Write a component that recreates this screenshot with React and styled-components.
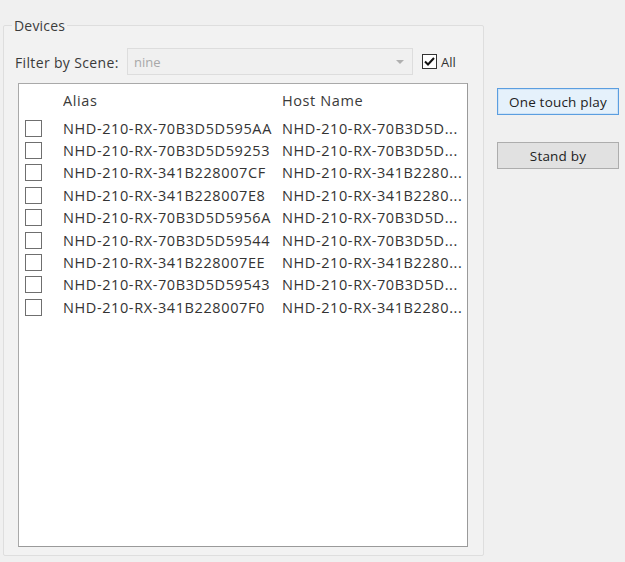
import styled, { createGlobalStyle } from "styled-components";

const GlobalStyle = createGlobalStyle`
  html, body {
    margin: 0;
    padding: 0;
    background: #f0f0f0;
  }
  body {
    font-family: "Open Sans", "Noto Sans", sans-serif;
    color: #333;
  }
`;

const Window = styled.div`
  width: 625px;
  height: 562px;
  display: flex;
  flex-direction: row;
  align-items: flex-start;
  background: #f0f0f0;
  overflow: hidden;
`;

const GroupBox = styled.fieldset`
  margin: 16px 0 0 3px;
  width: 480px;
  height: 540px;
  box-sizing: border-box;
  border: 1px solid #dedede;
  border-radius: 2px;
  padding: 0 15px 8px 13px;
  background: #f2f2f2;
  display: flex;
  flex-direction: column;
`;

const GroupTitle = styled.legend`
  margin-left: -5px;
  padding: 0 2px;
  font-size: 14px;
  letter-spacing: 0.2px;
  color: #3c3c3c;
`;

const FilterRow = styled.div`
  display: flex;
  align-items: center;
  height: 27px;
  margin-top: 13px;
  margin-left: -2px;
`;

const FilterLabel = styled.span`
  font-size: 14px;
  letter-spacing: 0.35px;
  color: #3a3a3a;
  width: 112px;
  padding-top: 2px;
`;

const Combo = styled.div`
  width: 286px;
  height: 27px;
  box-sizing: border-box;
  border: 1px solid #dddddd;
  background: #f0f0f0;
  display: flex;
  align-items: center;
  justify-content: space-between;
  padding: 0 6px 0 6px;
  font-size: 13px;
  color: #a8a8a8;
`;

const ComboArrow = styled.span`
  width: 0;
  height: 0;
  border-left: 4px solid transparent;
  border-right: 4px solid transparent;
  border-top: 4px solid #b0b0b0;
  margin-right: 2px;
`;

const CheckLabel = styled.label`
  display: flex;
  align-items: center;
  gap: 4px;
  margin-left: 9px;
  font-size: 13px;
  color: #333;
`;

const Box = styled.span`
  width: ${(p) => p.size}px;
  height: ${(p) => p.size}px;
  box-sizing: border-box;
  border: 1px solid ${(p) => (p.checked ? "#333" : "#6f6f6f")};
  background: #fff;
  display: flex;
  align-items: center;
  justify-content: center;
  flex-shrink: 0;
`;

const ListBox = styled.div`
  margin-top: 8px;
  margin-left: 1px;
  width: 450px;
  height: 464px;
  box-sizing: border-box;
  border: 1px solid #a9a9a9;
  border-right-color: #9a9a9a;
  border-bottom-color: #9a9a9a;
  background: #fff;
  display: flex;
  flex-direction: column;
`;

const Row = styled.div`
  display: grid;
  grid-template-columns: 44px 219px 182px;
  align-items: center;
  height: ${(p) => (p.header ? "33px" : "22.4px")};
  font-size: 14.5px;
  letter-spacing: 0.6px;
  color: ${(p) => (p.header ? "#3a3a3a" : "#333")};
  white-space: nowrap;
`;

const CheckCell = styled.div`
  display: flex;
  padding-left: 6px;
`;

const Cell = styled.div`
  overflow: hidden;
`;

const SideColumn = styled.div`
  display: flex;
  flex-direction: column;
  gap: 27px;
  margin: 88px 0 0 13px;
`;

const Button = styled.button`
  width: 122px;
  height: 27px;
  box-sizing: border-box;
  border: 1px solid ${(p) => (p.primary ? "#5b9ee0" : "#adadad")};
  box-shadow: ${(p) => (p.primary ? "inset 0 0 0 1px #cfe3f6" : "none")};
  background: ${(p) => (p.primary ? "#e5f1fb" : "#e1e1e1")};
  font-family: "Open Sans", "Noto Sans", sans-serif;
  font-size: 13.5px;
  letter-spacing: 0.2px;
  color: #222;
  padding: 0;
`;

const devices = [
  ["NHD-210-RX-70B3D5D595AA", "NHD-210-RX-70B3D5D..."],
  ["NHD-210-RX-70B3D5D59253", "NHD-210-RX-70B3D5D..."],
  ["NHD-210-RX-341B228007CF", "NHD-210-RX-341B2280..."],
  ["NHD-210-RX-341B228007E8", "NHD-210-RX-341B2280..."],
  ["NHD-210-RX-70B3D5D5956A", "NHD-210-RX-70B3D5D..."],
  ["NHD-210-RX-70B3D5D59544", "NHD-210-RX-70B3D5D..."],
  ["NHD-210-RX-341B228007EE", "NHD-210-RX-341B2280..."],
  ["NHD-210-RX-70B3D5D59543", "NHD-210-RX-70B3D5D..."],
  ["NHD-210-RX-341B228007F0", "NHD-210-RX-341B2280..."],
];

function Tick() {
  return (
    <svg width="11" height="9" viewBox="0 0 11 9">
      <path d="M1 4.5 L4 7.5 L10 1" fill="none" stroke="#111" strokeWidth="2" />
    </svg>
  );
}

export default function App() {
  return (
    <>
      <GlobalStyle />
      <Window>
        <GroupBox>
          <GroupTitle>Devices</GroupTitle>
          <FilterRow>
            <FilterLabel>Filter by Scene:</FilterLabel>
            <Combo>
              nine
              <ComboArrow />
            </Combo>
            <CheckLabel>
              <Box size={15} checked>
                <Tick />
              </Box>
              All
            </CheckLabel>
          </FilterRow>
          <ListBox>
            <Row header>
              <span />
              <Cell>Alias</Cell>
              <Cell>Host Name</Cell>
            </Row>
            {devices.map(([alias, host]) => (
              <Row key={alias}>
                <CheckCell>
                  <Box size={17} />
                </CheckCell>
                <Cell>{alias}</Cell>
                <Cell>{host}</Cell>
              </Row>
            ))}
          </ListBox>
        </GroupBox>
        <SideColumn>
          <Button primary>One touch play</Button>
          <Button>Stand by</Button>
        </SideColumn>
      </Window>
    </>
  );
}
